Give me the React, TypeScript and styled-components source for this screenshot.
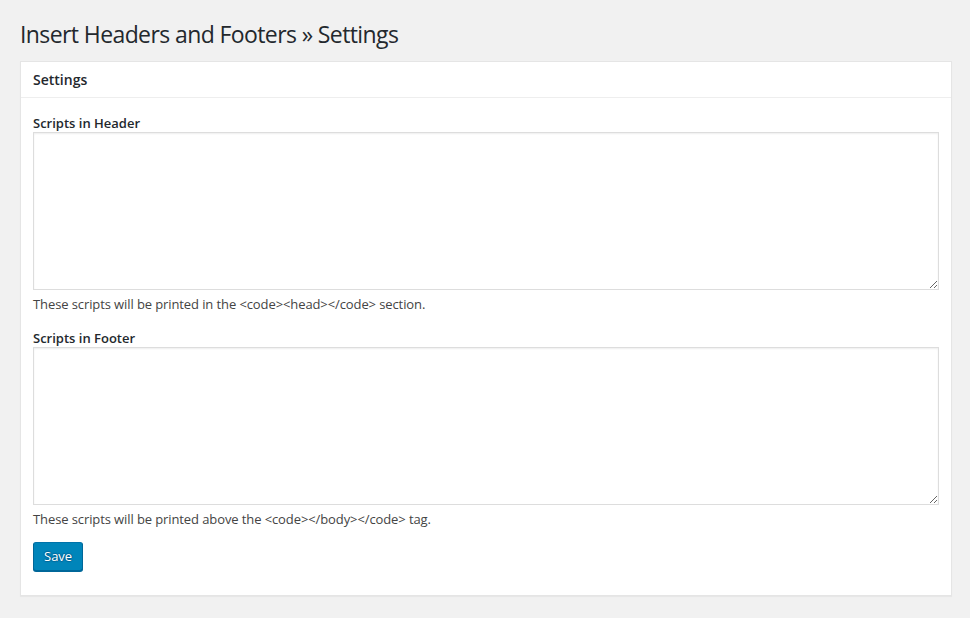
import React from "react";
import styled, { createGlobalStyle } from "styled-components";

const Global = createGlobalStyle`
  html, body { margin: 0; padding: 0; background: #f1f1f1; }
  body { font-family: "Open Sans", "Noto Sans", sans-serif; color: #444; font-size: 13px; }
`;

const Wrap = styled.div`
  padding: 20px 18px 20px 20px;
`;

const Title = styled.h1`
  margin: 0 0 12px 0;
  font-size: 23px;
  font-weight: 400;
  line-height: 29px;
  color: #23282d;
  letter-spacing: -0.6px;
`;

const Card = styled.div`
  background: #fff;
  border: 1px solid #e5e5e5;
  box-shadow: 0 1px 1px rgba(0, 0, 0, 0.04);
`;

const CardHeader = styled.h2`
  margin: 0;
  padding: 8px 12px;
  font-size: 14px;
  line-height: 19px;
  font-weight: 600;
  color: #23282d;
  border-bottom: 1px solid #eee;
`;

const CardBody = styled.div`
  padding: 16px 12px 24px 12px;
`;

const Field = styled.div`
  margin-bottom: 16px;
  &:last-of-type {
    margin-bottom: 14px;
  }
`;

const Label = styled.label`
  display: block;
  font-weight: 600;
  font-size: 13px;
  line-height: 18px;
  color: #23282d;
  margin-bottom: 0;
`;

const Area = styled.textarea`
  display: block;
  box-sizing: border-box;
  width: 100%;
  height: 158px;
  margin: 0;
  border: 1px solid #ddd;
  box-shadow: inset 0 1px 2px rgba(0, 0, 0, 0.07);
  background: #fff;
  font-family: "Liberation Mono", monospace;
  font-size: 13px;
  resize: vertical;
  outline: none;
`;

const Hint = styled.p`
  margin: 5px 0 0 0;
  font-size: 13px;
  line-height: 18px;
  color: #444;
  letter-spacing: -0.1px;
`;

const Button = styled.button`
  display: block;
  margin: 0;
  height: 29px;
  padding: 0 10px 2px;
  font-family: "Open Sans", "Noto Sans", sans-serif;
  font-size: 13px;
  color: #fff;
  background: #0085ba;
  border: 1px solid #0073aa;
  border-color: #0073aa #006799 #006799;
  border-radius: 3px;
  box-shadow: 0 1px 0 #006799;
  text-shadow: 0 -1px 1px #006799, 1px 0 1px #006799, 0 1px 1px #006799, -1px 0 1px #006799;
  cursor: pointer;
`;

export default function App() {
  return (
    <>
      <Global />
      <Wrap>
        <Title>Insert Headers and Footers » Settings</Title>
        <Card>
          <CardHeader>Settings</CardHeader>
          <CardBody>
            <Field>
              <Label>Scripts in Header</Label>
              <Area />
              <Hint>These scripts will be printed in the &lt;code&gt;&lt;head&gt;&lt;/code&gt; section.</Hint>
            </Field>
            <Field>
              <Label>Scripts in Footer</Label>
              <Area />
              <Hint>These scripts will be printed above the &lt;code&gt;&lt;/body&gt;&lt;/code&gt; tag.</Hint>
            </Field>
            <Button>Save</Button>
          </CardBody>
        </Card>
      </Wrap>
    </>
  );
}
